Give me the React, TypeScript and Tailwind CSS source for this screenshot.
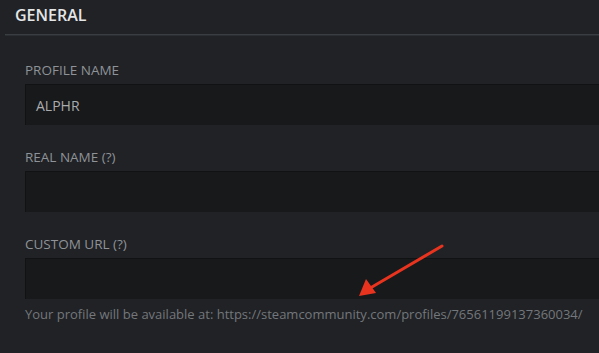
import React from "react";

function Field({ label, value }: { label: string; value?: string }) {
  return (
    <div className="flex flex-col">
      <label className="text-[13.5px] leading-4 uppercase text-[#8f9296]">{label}</label>
      <div className="mt-[6px] h-[41px] bg-[#18191b] border-t border-l border-[#111214] flex items-center pl-[10px] text-[14px] text-[#a9abae]">
        {value}
      </div>
    </div>
  );
}

export default function App() {
  return (
    <div
      className="relative w-[599px] h-[353px] overflow-hidden bg-[#202226]"
      style={{ fontFamily: '"Open Sans", "Noto Sans", sans-serif' }}
    >
      <div className="pl-[15px] pt-[5px] h-[34px]">
        <h2 className="text-[16px] leading-5 font-semibold text-[#e4e5e6]">GENERAL</h2>
      </div>
      <div className="ml-[5px] h-[2px] bg-[#3a3d42] border-b border-[#2b2e33]" />

      <div className="pl-[25px] pt-[26px] flex flex-col gap-[24px]">
        <Field label="Profile Name" value="ALPHR" />
        <Field label="Real Name (?)" />
        <div className="flex flex-col">
          <Field label="Custom URL (?)" />
          <p className="mt-[7px] text-[13px] leading-4 text-[#74777b]">
            Your profile will be available at: https://steamcommunity.com/profiles/76561199137360034/
          </p>
        </div>
      </div>

      <svg className="absolute left-0 top-0" width="599" height="353" viewBox="0 0 599 353">
        <line x1="442" y1="246" x2="372" y2="287" stroke="#e8341f" strokeWidth="3" strokeLinecap="round" />
        <polygon points="359,296 366,279 376,293" fill="#e8341f" />
      </svg>
    </div>
  );
}
